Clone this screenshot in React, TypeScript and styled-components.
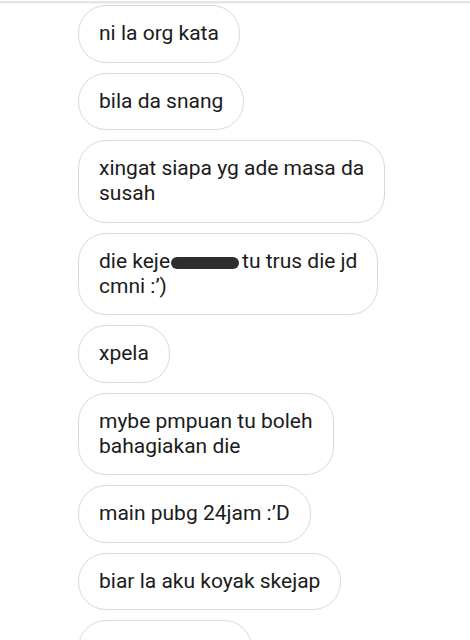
import styled, { createGlobalStyle } from "styled-components";

const GlobalStyle = createGlobalStyle`
  html, body {
    margin: 0;
    padding: 0;
    background: #ffffff;
  }
  body {
    font-family: Roboto, "Liberation Sans", sans-serif;
  }
`;

const Page = styled.main`
  width: 470px;
  height: 640px;
  overflow: hidden;
  background: #ffffff;
`;

const TopEdge = styled.div`
  height: 2px;
  margin-top: 1px;
  background: #e4e4e4;
  box-shadow: 0 1px 1px rgba(0, 0, 0, 0.05);
`;

const Thread = styled.ul`
  list-style: none;
  margin: 0;
  padding: 2px 0 0 78px;
  display: flex;
  flex-direction: column;
  align-items: flex-start;
  gap: 10px;
`;

const Bubble = styled.li`
  box-sizing: border-box;
  border: 1px solid #d9d9d9;
  border-radius: 28px;
  background: #ffffff;
  padding: 15.25px 20px;
  font-size: 21px;
  line-height: 25px;
  color: #1b1b1b;
  white-space: pre-line;
`;

const Redacted = styled.span`
  display: inline-block;
  width: 68px;
  height: 12px;
  margin: 0 3px 0 1px;
  border-radius: 6px;
  background: #2e2e2e;
  vertical-align: -1px;
`;

const Placeholder = styled.li`
  width: 174px;
  height: 57px;
  box-sizing: border-box;
  border: 1px solid #d9d9d9;
  border-radius: 28px;
`;

const messages = [
  "ni la org kata",
  "bila da snang",
  "xingat siapa yg ade masa da\nsusah",
  null,
  "xpela",
  "mybe pmpuan tu boleh\nbahagiakan die",
  "main pubg 24jam :’D",
  "biar la aku koyak skejap",
];

export default function App() {
  return (
    <Page>
      <GlobalStyle />
      <TopEdge />
      <Thread>
        {messages.map((text, i) =>
          text === null ? (
            <Bubble key={i}>
              die keje
              <Redacted />
              tu trus die jd{"\n"}cmni :’)
            </Bubble>
          ) : (
            <Bubble key={i}>{text}</Bubble>
          )
        )}
        <Placeholder />
      </Thread>
    </Page>
  );
}
